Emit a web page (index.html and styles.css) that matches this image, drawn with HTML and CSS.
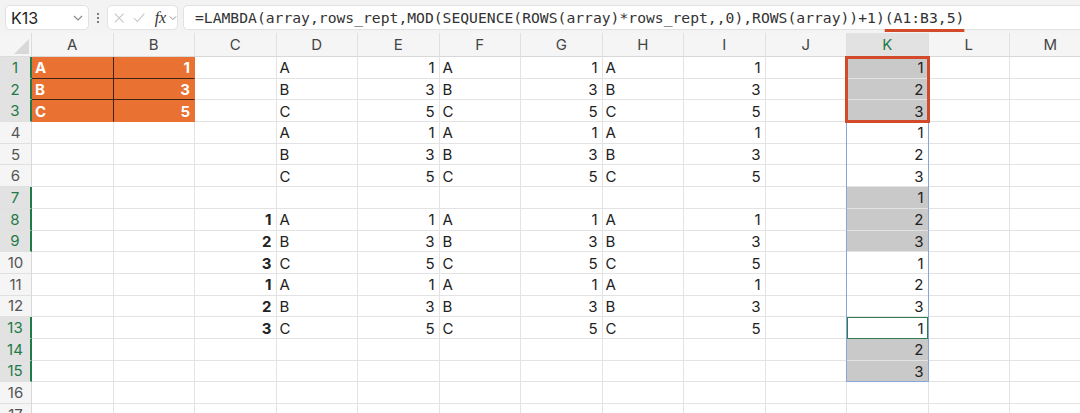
FILE: index.html
```html
<!DOCTYPE html>
<html lang="en">
<head>
    <meta charset="UTF-8">
    <meta name="viewport" content="width=device-width, initial-scale=1.0">
    <title>LAMBDA repeat</title>
    <link rel="stylesheet" href="styles.css">
</head>
<body>
    <div class="toolbar">
        <div class="name-box">
            <span>K13</span>
            <svg class="chev" width="10" height="6" viewBox="0 0 10 6"><polyline points="1,1 5,5 9,1" /></svg>
        </div>
        <div class="grip"><i></i><i></i><i></i></div>
        <div class="fx-tools">
            <svg class="tool" width="12" height="12" viewBox="0 0 12 12"><path d="M1 1 L11 11 M11 1 L1 11" /></svg>
            <svg class="tool" width="14" height="12" viewBox="0 0 14 12"><polyline points="1,6 5,10 13,1" /></svg>
            <span class="fx">fx</span>
            <svg class="chev" width="9" height="6" viewBox="0 0 10 6"><polyline points="1,1 5,5 9,1" /></svg>
        </div>
        <div class="formula">=LAMBDA(array,rows_rept,MOD(SEQUENCE(ROWS(array)*rows_rept,,0),ROWS(array))+1)<span class="ref">(A1:B3,5)</span></div>
    </div>

    <div class="sheet" id="sheet"></div>

    <script>
        const sheet = document.getElementById('sheet');
        const letters = 'ABCDEFGHIJKLM'.split('');

        // cells A..K per row, blanks are empty strings
        const data = [
            ['A', '1', '', 'A', '1', 'A', '1', 'A', '1', '', '1'],
            ['B', '3', '', 'B', '3', 'B', '3', 'B', '3', '', '2'],
            ['C', '5', '', 'C', '5', 'C', '5', 'C', '5', '', '3'],
            ['', '', '', 'A', '1', 'A', '1', 'A', '1', '', '1'],
            ['', '', '', 'B', '3', 'B', '3', 'B', '3', '', '2'],
            ['', '', '', 'C', '5', 'C', '5', 'C', '5', '', '3'],
            ['', '', '', '', '', '', '', '', '', '', '1'],
            ['', '', '1', 'A', '1', 'A', '1', 'A', '1', '', '2'],
            ['', '', '2', 'B', '3', 'B', '3', 'B', '3', '', '3'],
            ['', '', '3', 'C', '5', 'C', '5', 'C', '5', '', '1'],
            ['', '', '1', 'A', '1', 'A', '1', 'A', '1', '', '2'],
            ['', '', '2', 'B', '3', 'B', '3', 'B', '3', '', '3'],
            ['', '', '3', 'C', '5', 'C', '5', 'C', '5', '', '1'],
            ['', '', '', '', '', '', '', '', '', '', '2'],
            ['', '', '', '', '', '', '', '', '', '', '3'],
            [],
            []
        ];
        const selectedRows = [1, 2, 3, 7, 8, 9, 13, 14, 15];

        const add = (cls, text, row, col) => {
            const el = document.createElement('div');
            el.className = cls;
            el.textContent = text;
            el.style.gridArea = `${row} / ${col}`;
            sheet.appendChild(el);
            return el;
        };

        const corner = add('corner', '', 1, 1);
        corner.innerHTML = '<svg width="15" height="15" viewBox="0 0 15 15"><polygon points="15,0 15,15 0,15" /></svg>';

        letters.forEach((l, i) => {
            add(l === 'K' ? 'col-head sel' : 'col-head', l, 1, i + 2);
        });

        data.forEach((row, r) => {
            const n = r + 1;
            add(selectedRows.includes(n) ? 'row-head sel' : 'row-head', n, n + 1, 1);
            letters.forEach((l, c) => {
                const v = row[c] || '';
                let cls = 'cell';
                if (/^\d+$/.test(v)) cls += ' num';
                if (l === 'C' && v) cls += ' bold';
                if (n <= 3 && c < 2) {
                    cls += ' orange';
                    if (c === 0) cls += ' line-r';
                    if (n < 3) cls += ' line-b';
                }
                if (l === 'K' && selectedRows.includes(n) && n !== 13) cls += ' picked';
                add(cls, v, n + 1, c + 2);
            });
        });

        // range outlines drawn over the grid
        ['spill', 'ref-box', 'active-cell'].forEach(name => {
            const box = document.createElement('div');
            box.className = name;
            sheet.appendChild(box);
        });
    </script>
</body>
</html>
```

FILE: styles.css
```css
body {
    margin: 0;
    overflow: hidden;
    background-color: #fff;
    font-family: Inter, "Noto Sans", sans-serif;
    color: #222;
}
.toolbar {
    display: flex;
    align-items: center;
    height: 33px;
    box-sizing: border-box;
    padding: 5px 0 3px 5px;
    background-color: #f3f3f3;
}
.name-box {
    display: flex;
    align-items: center;
    justify-content: space-between;
    width: 84px;
    height: 25px;
    box-sizing: border-box;
    padding: 0 5px 0 5px;
    background-color: #fff;
    border: 1px solid #e2e2e2;
    border-radius: 5px;
    font-size: 16px;
    color: #222;
}
.chev polyline {
    fill: none;
    stroke: #8a8a8a;
    stroke-width: 1.2;
}
.grip {
    display: flex;
    flex-direction: column;
    gap: 2px;
    margin: 0 8px 0 8px;
}
.grip i {
    width: 2px;
    height: 2px;
    border-radius: 1px;
    background-color: #555;
}
.fx-tools {
    display: flex;
    align-items: center;
    gap: 9px;
    width: 71px;
    height: 25px;
    box-sizing: border-box;
    padding-left: 6px;
    background-color: #fff;
    border: 1px solid #e2e2e2;
    border-radius: 5px;
}
.tool path, .tool polyline {
    fill: none;
    stroke: #c4c4c4;
    stroke-width: 1.2;
}
.fx {
    font-family: "Liberation Serif", serif;
    font-style: italic;
    font-size: 16px;
    color: #333;
    margin-right: -6px;
}
.formula {
    flex: 1;
    height: 25px;
    box-sizing: border-box;
    margin-left: 5px;
    padding-left: 11px;
    background-color: #fff;
    border: 1px solid #e2e2e2;
    border-right: none;
    border-radius: 5px 0 0 5px;
    font-family: "DejaVu Sans Mono", monospace;
    font-size: 14.7px;
    line-height: 23px;
    color: #333;
    white-space: nowrap;
    overflow: visible;
}
.ref {
    text-decoration: underline;
    text-decoration-color: #d24a2a;
    text-decoration-thickness: 3px;
    text-underline-offset: 6px;
}
.sheet {
    display: grid;
    grid-template-columns: 32px repeat(13, 81.5px);
    grid-template-rows: 24px repeat(17, 21.7px);
    height: 380px;
    overflow: hidden;
    font-size: 15px;
}
.corner {
    display: flex;
    align-items: flex-end;
    justify-content: flex-end;
    padding: 0 2px 2px 0;
    background-color: #f5f5f5;
    border-right: 1px solid #dcdcdc;
    border-bottom: 1px solid #dcdcdc;
}
.corner polygon {
    fill: #d8d8d8;
}
.col-head {
    display: flex;
    align-items: center;
    justify-content: center;
    background-color: #f5f5f5;
    border-right: 1px solid #e0e0e0;
    border-bottom: 1px solid #d8d8d8;
    color: #444;
}
.col-head.sel {
    background-color: #e2e2e2;
    color: #1f7a47;
}
.row-head {
    display: flex;
    align-items: center;
    justify-content: center;
    background-color: #f5f5f5;
    border-right: 1px solid #d8d8d8;
    border-bottom: 1px solid #e0e0e0;
    color: #555;
    font-size: 15px;
}
.row-head.sel {
    background-color: #e2e2e2;
    color: #1f7a47;
    border-right: 2px solid #1f7a47;
}
.cell {
    display: flex;
    align-items: center;
    padding: 1px 4px 0 3px;
    border-right: 1px solid #e3e3e3;
    border-bottom: 1px solid #e3e3e3;
    white-space: nowrap;
    overflow: hidden;
}
.cell.num {
    justify-content: flex-end;
}
.cell.bold {
    font-weight: 700;
}
.cell.orange {
    background-color: #e97132;
    color: #fff;
    font-weight: 700;
    border-right-color: #e97132;
    border-bottom-color: #e97132;
}
.cell.orange.line-r {
    border-right-color: #3f2416;
}
.cell.orange.line-b {
    border-bottom-color: #3f2416;
}
.cell.picked {
    background-color: #c9c9c9;
}
.spill {
    position: relative;
    grid-column: 12;
    grid-row: 2 / 17;
    margin-left: -1px;
    border: 1px solid #88a4d8;
    pointer-events: none;
}
.ref-box {
    position: relative;
    grid-column: 12;
    grid-row: 2 / 5;
    margin: -1px -1px -1px -2px;
    border: 3px solid #d24a2a;
    pointer-events: none;
}
.active-cell {
    position: relative;
    grid-column: 12;
    grid-row: 14;
    margin-right: 1px;
    border: 1.5px solid #2f7d50;
    pointer-events: none;
}
```
